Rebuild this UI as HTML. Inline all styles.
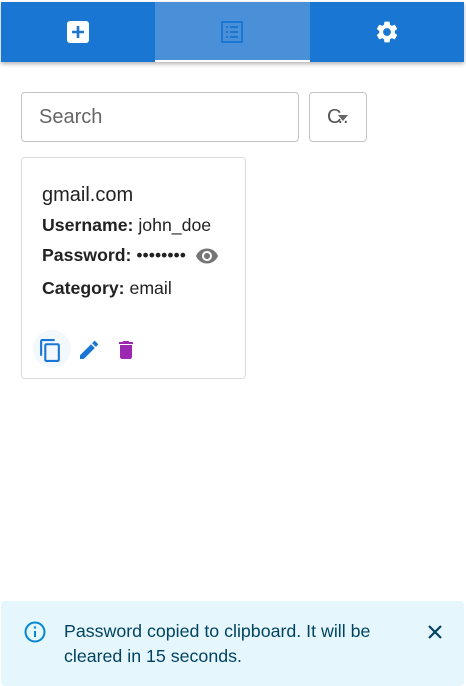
<!DOCTYPE html>
<html><head><style>
*{box-sizing:border-box;margin:0;padding:0}
body{width:466px;height:686px;background:#fff;font-family:"Liberation Sans",Arial,sans-serif;position:relative;overflow:hidden}
.nav{position:absolute;left:1px;top:2px;width:463px;height:60px;background:#1976d2;box-shadow:0 2px 4px rgba(0,0,0,.3);display:flex}
.tab{width:154.5px;height:60px;display:flex;align-items:center;justify-content:center;position:relative}
.tab.act{background:#4a90d9}
.tab.act:after{content:"";position:absolute;left:0;right:0;bottom:0;height:2px;background:#fff}
.inp{position:absolute;left:21px;top:92px;width:278px;height:50px;border:1px solid #c4c4c4;border-radius:4px;font-size:20px;color:#666;padding:13px 0 0 17px}
.btn{position:absolute;left:309px;top:92px;width:58px;height:50px;border:1px solid #c4c4c4;border-radius:4px;font-size:20px;color:#555;padding:13px 0 0 17px}
.card{position:absolute;left:21px;top:157px;width:225px;height:222px;border:1px solid #ddd;border-radius:4px}
.t{position:absolute;left:20px;color:#222;font-size:17.7px;white-space:nowrap}
.alert{position:absolute;left:1px;top:601px;width:463px;height:85px;background:#e5f6fd;border-radius:4px;color:#014361;font-size:17.8px}
</style></head><body>
<div class="nav">
<div class="tab"><svg width="24" height="24" viewBox="0 0 24 24"><rect x="1" y="1" width="22" height="22" rx="3" fill="#fff"/><path d="M12 6v12M6 12h12" stroke="#1976d2" stroke-width="2.6"/></svg></div>
<div class="tab act"><svg width="24" height="24" viewBox="0 0 24 24"><rect x="2" y="2" width="20" height="20" fill="none" stroke="#1976d2" stroke-width="2"/><path d="M6 7h2M10 7h8M6 12h2M10 12h8M6 17h2M10 17h8" stroke="#1976d2" stroke-width="2"/></svg></div>
<div class="tab"><svg width="26" height="26" viewBox="0 0 24 24"><path fill="#fff" d="M19.14 12.94c.04-.3.06-.61.06-.94s-.02-.64-.07-.94l2.030-1.58a.49.49 0 0 0 .12-.61l-1.92-3.32a.488.488 0 0 0-.59-.22l-2.39.96c-.5-.38-1.03-.7-1.62-.94l-.36-2.54a.484.484 0 0 0-.48-.41h-3.84c-.24 0-.43.17-.47.41l-.36 2.540c-.59.24-1.13.57-1.62.94l-2.39-.96c-.22-.08-.47 0-.59.22L2.74 8.87c-.12.21-.08.47.12.61l2.03 1.58c-.05.3-.09.63-.09.94s.02.64.07.94l-2.03 1.58a.49.49 0 0 0-.12.61l1.92 3.32c.12.22.37.29.59.22l2.39-.96c.5.38 1.03.7 1.62.94l.36 2.54c.05.24.24.41.48.41h3.84c.24 0 .44-.17.47-.41l.36-2.54c.59-.24 1.13-.56 1.62-.94l2.39.96c.22.08.47 0 .59-.22l1.92-3.32c.12-.22.07-.47-.12-.61l-2.01-1.58zM12 15.6c-1.98 0-3.6-1.62-3.6-3.6s1.62-3.6 3.6-3.6 3.6 1.62 3.6 3.6-1.62 3.6-3.6 3.6z"/></svg></div>
</div>
<div class="inp">Search</div>
<div class="btn">C<span style="position:relative;left:-4px">..</span><svg style="position:absolute;left:28px;top:22px" width="10" height="6"><path d="M0 0h10L5 6z" fill="#666"/></svg></div>
<div class="card">
<div class="t" style="top:26px;font-size:20px">gmail.com</div>
<div class="t" style="top:57px"><b>Username:</b> john_doe</div>
<div class="t" style="top:87px"><b>Password:</b> ••••••••</div>
<svg style="position:absolute;left:173px;top:86px" width="24" height="24" viewBox="0 0 24 24"><path fill="#757575" d="M12 4.5C7 4.5 2.73 7.61 1 12c1.73 4.39 6 7.5 11 7.5s9.27-3.11 11-7.5c-1.73-4.39-6-7.5-11-7.5zM12 17c-2.76 0-5-2.24-5-5s2.24-5 5-5 5 2.24 5 5-2.24 5-5 5zm0-8c-1.66 0-3 1.34-3 3s1.34 3 3 3 3-1.34 3-3-1.34-3-3-3z"/></svg>
<div class="t" style="top:120px"><b>Category:</b> email</div>
<div style="position:absolute;left:11px;top:172px;width:38px;height:38px;border-radius:50%;background:#f3f8fd"></div>
<svg style="position:absolute;left:16px;top:180px" width="25" height="25" viewBox="0 0 24 24"><path fill="#1976d2" d="M16 1H4c-1.1 0-2 .9-2 2v14h2V3h12V1zm3 4H8c-1.1 0-2 .9-2 2v14c0 1.1.9 2 2 2h11c1.1 0 2-.9 2-2V7c0-1.1-.9-2-2-2zm0 16H8V7h11v14z"/></svg>
<svg style="position:absolute;left:55px;top:180px" width="24" height="24" viewBox="0 0 24 24"><path fill="#1976d2" d="M3 17.25V21h3.75L17.81 9.94l-3.75-3.75L3 17.25zM20.71 7.04a.996.996 0 0 0 0-1.41l-2.34-2.34a.996.996 0 0 0-1.41 0l-1.830 1.83 3.75 3.75 1.83-1.83z"/></svg>
<svg style="position:absolute;left:92px;top:180px" width="24" height="24" viewBox="0 0 24 24"><path fill="#9c27b0" d="M6 19c0 1.1.9 2 2 2h8c1.1 0 2-.9 2-2V7H6v12zM19 4h-3.5l-1-1h-5l-1 1H5v2h14V4z"/></svg>
</div>
<div class="alert">
<svg style="position:absolute;left:22px;top:19px" width="24" height="24" viewBox="0 0 24 24"><circle cx="12" cy="12" r="9.5" fill="none" stroke="#0288d1" stroke-width="2"/><path d="M12 11v6" stroke="#0288d1" stroke-width="2"/><circle cx="12" cy="7.5" r="1.2" fill="#0288d1"/></svg>
<div style="position:absolute;left:63px;top:18px;line-height:25px;width:340px">Password copied to clipboard. It will be cleared in 15 seconds.</div>
<svg style="position:absolute;left:424px;top:21px" width="20" height="20" viewBox="0 0 20 20"><path d="M4 4l12 12M16 4L4 16" stroke="#014361" stroke-width="2.2"/></svg>
</div>
</body></html>
